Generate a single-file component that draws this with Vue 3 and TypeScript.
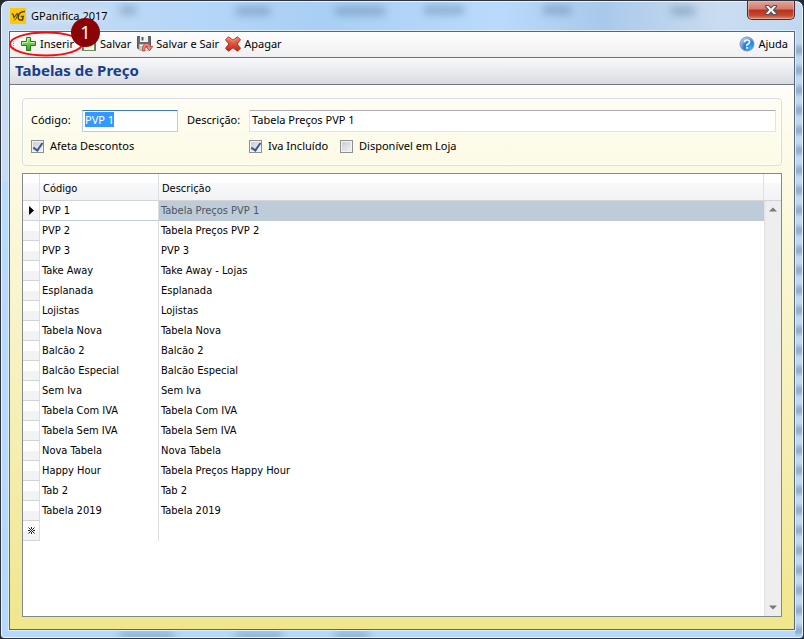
<script setup lang="ts">
import { onMounted, ref } from 'vue'

interface PriceTable {
  code: string
  description: string
}

const priceTables: PriceTable[] = [
  { code: 'PVP 1', description: 'Tabela Preços PVP 1' },
  { code: 'PVP 2', description: 'Tabela Preços PVP 2' },
  { code: 'PVP 3', description: 'PVP 3' },
  { code: 'Take Away', description: 'Take Away - Lojas' },
  { code: 'Esplanada', description: 'Esplanada' },
  { code: 'Lojistas', description: 'Lojistas' },
  { code: 'Tabela Nova', description: 'Tabela Nova' },
  { code: 'Balcão 2', description: 'Balcão 2' },
  { code: 'Balcão Especial', description: 'Balcão Especial' },
  { code: 'Sem Iva', description: 'Sem Iva' },
  { code: 'Tabela Com IVA', description: 'Tabela Com IVA' },
  { code: 'Tabela Sem IVA', description: 'Tabela Sem IVA' },
  { code: 'Nova Tabela', description: 'Nova Tabela' },
  { code: 'Happy Hour', description: 'Tabela Preços Happy Hour' },
  { code: 'Tab 2', description: 'Tab 2' },
  { code: 'Tabela 2019', description: 'Tabela 2019' },
]

const selected = ref(0)
const code = ref(priceTables[0].code)
const description = ref(priceTables[0].description)
const affectsDiscounts = ref(true)
const vatIncluded = ref(true)
const availableInShop = ref(false)
const codeInput = ref<HTMLInputElement | null>(null)

function selectRow(index: number): void {
  selected.value = index
  code.value = priceTables[index].code
  description.value = priceTables[index].description
}

onMounted(() => {
  codeInput.value?.focus()
  codeInput.value?.select()
})
</script>

<template>
  <div class="window">
    <div class="glass" aria-hidden="true">
      <i class="smudge s1"></i><i class="smudge s2"></i><i class="smudge s3"></i>
      <i class="smudge s4"></i><i class="smudge s5"></i><i class="smudge s6"></i>
      <i class="smudge s7"></i><i class="smudge s8"></i><i class="smudge s9"></i>
      <i class="streaks"></i>
    </div>

    <header class="titlebar">
      <svg class="app-icon" viewBox="0 0 16 16" aria-hidden="true">
        <rect width="16" height="16" fill="#fcc70d" />
        <path d="M1.500 6l1.500 0 1 3.500L7.500 5" fill="none" stroke="#4d4312" stroke-width="1.200" />
        <path d="M4 12.500Q7 11 8 5.500" fill="none" stroke="#4d4312" stroke-width="1" />
        <path d="M15 3.500Q9.500 3.500 8.500 7.500T10 12H12.500L13.300 8.500H10.800" fill="none" stroke="#4d4312" stroke-width="1.400" />
      </svg>
      <span class="title">GPanifica 2017</span>
      <button class="close" type="button" aria-label="Fechar">
        <svg viewBox="0 0 14 12" aria-hidden="true">
          <path d="M1.500 1.500h3.300L7 3.800l2.200-2.300h3.300v1.200L9.400 6l3.100 3.300v1.200H9.200L7 8.200l-2.200 2.300H1.500V9.300L4.600 6 1.500 2.700z" fill="#fff" stroke="#535666" stroke-width="1.200" />
        </svg>
      </button>
    </header>

    <main class="client">
      <nav class="toolbar">
        <span class="grip" aria-hidden="true"></span>
        <div class="insert">
          <button class="tool" type="button">
            <svg viewBox="0 0 16 16" aria-hidden="true">
              <defs>
                <linearGradient id="green" x1="0" y1="0" x2="0" y2="1">
                  <stop offset="0" stop-color="#a5e68c" />
                  <stop offset="1" stop-color="#34a51d" />
                </linearGradient>
              </defs>
              <path d="M5.500 1.500h4v4h5v4h-5v5h-4v-5h-5v-4h5z" fill="url(#green)" stroke="#257c19" />
              <path d="M6.500 6.500v-4h2M1.500 8.500V6.500h5M9.500 6.500h4" fill="none" stroke="#c9f3b4" />
            </svg>
            Inserir
          </button>
          <svg class="ring" viewBox="0 0 74 26" aria-hidden="true">
            <ellipse cx="37" cy="13" rx="36" ry="11.500" fill="none" stroke="#f80c0c" stroke-width="2" />
          </svg>
          <span class="step">1</span>
        </div>
        <button class="tool" type="button">
          <svg viewBox="0 0 16 16" aria-hidden="true">
            <path d="M1 1h14v14H1z" fill="#6d7278" />
            <path d="M3 1h9v6H3z" fill="#f6f6f6" />
            <path d="M2.500 7.500h11v7h-11z" fill="#eef6e6" stroke="#6c8c59" />
          </svg>
          Salvar
        </button>
        <button class="tool" type="button">
          <svg viewBox="0 0 16 16" aria-hidden="true">
            <path d="M.5.500H13.500V13.500H2L.5 12z" fill="#696d72" stroke="#53575d" />
            <path d="M3 0h8v6H3z" fill="#f4f4f4" />
            <path d="M4.500 1h2v3.500h-2z" fill="#585c60" />
            <path d="M2.500 8.500h9v6h-9z" fill="#fff" stroke="#bfc2c4" />
            <path d="M3 11h3M3 13h2" stroke="#74a861" />
            <path d="M5.500 15Q5 7.200 10 7.200 13.500 7.500 13.500 10.500H15.800L12.300 14.800 8.800 10.500H10.800Q8 9.500 7.800 15z" fill="#ef8278" stroke="#b33a35" stroke-width=".8" />
          </svg>
          Salvar e Sair
        </button>
        <button class="tool" type="button">
          <svg viewBox="0 0 16 16" aria-hidden="true">
            <defs>
              <linearGradient id="red" x1="0" y1="0" x2="0" y2="1">
                <stop offset="0" stop-color="#f58064" />
                <stop offset="1" stop-color="#c62410" />
              </linearGradient>
            </defs>
            <path d="M3.500.800L8 4.200 12.500.800l3 3L12 8l3.500 4.200-3 3L8 11.800l-4.500 3.400-3-3L4 8 .500 3.800z" fill="url(#red)" stroke="#a51c0d" stroke-width=".9" />
            <path d="M2 3.700L3.700 2 8 5.500 12.500 2" fill="none" stroke="#f9a48c" stroke-width=".8" />
          </svg>
          Apagar
        </button>
        <a class="tool help" href="#ajuda">
          <svg viewBox="0 0 16 16" aria-hidden="true">
            <defs>
              <radialGradient id="blue" cx=".75" cy=".8" r=".9">
                <stop offset="0" stop-color="#35b5f5" />
                <stop offset=".5" stop-color="#2a78dc" />
                <stop offset="1" stop-color="#b5d3f4" />
              </radialGradient>
            </defs>
            <circle cx="8" cy="8" r="7" fill="url(#blue)" stroke="#8298b8" />
            <path d="M5.500 6.300Q5.500 4 8 4t2.600 2.100Q10.600 7.300 9 8T8 9.800M8 11v1.800" fill="none" stroke="#fff" stroke-width="1.700" />
          </svg>
          Ajuda
        </a>
      </nav>

      <h1 class="heading">Tabelas de Preço</h1>

      <section class="content">
        <form class="editor" @submit.prevent>
          <label for="code">Código:</label>
          <input id="code" ref="codeInput" v-model="code" class="field" type="text" />
          <label class="description-label" for="description">Descrição:</label>
          <input id="description" v-model="description" class="field" type="text" />
          <label class="check first">
            <input v-model="affectsDiscounts" type="checkbox" />Afeta Descontos
          </label>
          <div class="checks">
            <label class="check"><input v-model="vatIncluded" type="checkbox" />Iva Incluído</label>
            <label class="check"><input v-model="availableInShop" type="checkbox" />Disponível em Loja</label>
          </div>
        </form>

        <div class="grid">
          <table>
            <colgroup>
              <col class="col-mark" />
              <col class="col-code" />
              <col />
            </colgroup>
            <thead>
              <tr>
                <th></th>
                <th scope="col">Código</th>
                <th scope="col">Descrição</th>
              </tr>
            </thead>
            <tbody>
              <tr
                v-for="(row, index) in priceTables"
                :key="index"
                :class="{ selected: index === selected }"
                @click="selectRow(index)"
              >
                <td class="mark">
                  <svg v-if="index === selected" class="arrow" viewBox="0 0 5 9" aria-hidden="true">
                    <path d="M0 0l5 4.500L0 9z" />
                  </svg>
                </td>
                <td>{{ row.code }}</td>
                <td>{{ row.description }}</td>
              </tr>
              <tr>
                <td class="mark">
                  <svg class="star" viewBox="0 0 7 7" aria-hidden="true">
                    <path d="M.5.500l6 6M6.500.500l-6 6M3.500 0v2M3.500 5v2M0 3.500h2M5 3.500h2" fill="none" stroke="#222" />
                  </svg>
                </td>
                <td></td>
                <td></td>
              </tr>
            </tbody>
          </table>
          <div class="scroll">
            <div class="scroll-head"></div>
            <button type="button" aria-label="Para cima">
              <svg viewBox="0 0 8 5" aria-hidden="true"><path d="M0 4.500L4 .500l4 4z" /></svg>
            </button>
            <button class="down" type="button" aria-label="Para baixo">
              <svg viewBox="0 0 8 5" aria-hidden="true"><path d="M0 .500h8l-4 4z" /></svg>
            </button>
          </div>
        </div>
      </section>
    </main>
  </div>
</template>

<style>
body {
  background: #23272e;
}
</style>

<style scoped>
* {
  box-sizing: border-box;
}

.window {
  position: relative;
  display: flex;
  flex-direction: column;
  min-height: 100vh;
  padding: 0 8px 8px;
  border: 1px solid #2d3440;
  border-radius: 8px 8px 4px 4px;
  background: linear-gradient(90deg, #c9dcf0 0, #b4d6f8 25%, #a9cff4 40%, #b9dafb 62%, #a9c9ea 75%, #cadcf0 90%, #c0d8f0 100%);
  box-shadow: inset 0 0 0 1px #eaf5ff;
  color: #000;
  font-family: "Noto Sans", "Open Sans", sans-serif;
  font-size: 11px;
}

.glass {
  position: absolute;
  inset: 1px;
  overflow: hidden;
  border-radius: 7px 7px 3px 3px;
  background:
    linear-gradient(#b9dafb, #b4d7fb) 0 180px / 7px 100% no-repeat,
    linear-gradient(#b9dafb, #b4d7fb) 0 100% / 100% 8px no-repeat;
}

.smudge {
  position: absolute;
  height: 8px;
  background: #41658a;
  opacity: 0.4;
  filter: blur(4px);
}

.s1 { left: 118px; top: 4px; width: 16px; }
.s2 { left: 234px; top: 5px; width: 34px; }
.s3 { left: 333px; top: 5px; width: 50px; }
.s4 { left: 422px; top: 4px; width: 40px; }
.s5 { left: 541px; top: 4px; width: 28px; }
.s6 { left: 669px; top: 5px; width: 24px; }
.s7 { left: 118px; bottom: -3px; width: 54px; }
.s8 { left: 234px; bottom: -3px; width: 46px; }
.s9 { left: 333px; bottom: -3px; width: 34px; }

.streaks {
  position: absolute;
  top: 35px;
  right: 0;
  bottom: 0;
  width: 7px;
  background: repeating-linear-gradient(transparent 0 6px, #6b8db288 12px 15px, transparent 20px);
}

.titlebar {
  position: relative;
  display: flex;
  align-items: center;
  height: 30px;
  padding-left: 1px;
}

.app-icon {
  width: 16px;
  height: 16px;
}

.title {
  margin-left: 5px;
  line-height: 14px;
  text-shadow: 0 0 6px #fff, 0 0 10px #fff;
}

.close {
  display: grid;
  place-items: center;
  align-self: flex-start;
  width: 48px;
  height: 19px;
  margin-left: auto;
  padding: 0;
  border: 1px solid #4d2a33;
  border-top: 0;
  border-radius: 0 0 5px 5px;
  background: linear-gradient(#e5a397, #d07c6e 45%, #b8301c 50%, #c5492f 80%, #e08a65);
  box-shadow: inset 0 0 0 1px #f0c4bb88;
}

.close svg {
  width: 14px;
  height: 12px;
}

.client {
  position: relative;
  display: flex;
  flex: 1;
  flex-direction: column;
  border: 1px solid #56677c;
  box-shadow: 0 0 0 1px #dcedfd;
  background: #fff;
}

.toolbar {
  display: flex;
  align-items: center;
  gap: 7px;
  height: 26px;
  padding: 0 7px 2px 3px;
  border-bottom: 1px solid #6d6e72;
  background: linear-gradient(#fdfdfd, #f0f0f0);
}

.grip {
  width: 1px;
  height: 12px;
  border-left: 1px dotted #999;
}

.insert {
  position: relative;
}

.tool {
  display: flex;
  align-items: center;
  gap: 3px;
  height: 22px;
  padding: 0;
  border: 0;
  background: none;
  color: #000;
  font: inherit;
  text-decoration: none;
  white-space: nowrap;
}

.tool svg {
  width: 16px;
  height: 16px;
}

.help {
  margin-left: auto;
}

.tool + .tool,
.insert + .tool {
  margin-right: -1px;
}

.ring {
  position: absolute;
  top: -2px;
  left: -12px;
  width: 74px;
  height: 26px;
  pointer-events: none;
}

.step {
  position: absolute;
  z-index: 1;
  top: -15px;
  left: 50px;
  width: 29px;
  height: 29px;
  border-radius: 50%;
  background: #8b0305;
  color: #fff;
  font-size: 18px;
  line-height: 28px;
  text-align: center;
}

.heading {
  height: 27px;
  margin: 0;
  padding-left: 5px;
  border-bottom: 1px solid #75777d;
  background: linear-gradient(#f8f9fa, #d8dce2);
  color: #183f8c;
  font-size: 15px;
  line-height: 25px;
}

.content {
  display: flex;
  flex: 1;
  flex-direction: column;
  gap: 7px;
  padding: 13px 12px 12px;
  background: linear-gradient(#fffdf8, #fdfced 8%, #f0e68c);
}

.editor {
  display: grid;
  grid-template-columns: 51px 96px 71px 1fr;
  align-items: center;
  row-gap: 4px;
  padding: 11px 5px 9px 8px;
  border: 1px solid #d5dfe5;
  border-radius: 4px;
  box-shadow: inset 0 0 0 1px #fffef5;
  line-height: 14px;
}

.editor > label:not(.check) {
  padding-bottom: 2px;
}

.description-label {
  padding-left: 9px;
}

.field {
  width: 100%;
  height: 22px;
  padding: 0 2px 3px;
  border: 1px solid #e2e3ea;
  border-top-color: #abadb3;
  border-radius: 1px;
  outline: 0;
  background: #fff;
  color: #000;
  font: inherit;
}

.field:focus {
  border-color: #b5cfe7;
  border-top-color: #3d7bad;
}

.field::selection {
  background: #3399ff;
  color: #fff;
}

.first {
  grid-column: 1 / 4;
}

.checks {
  display: flex;
  gap: 12px;
}

.check {
  display: flex;
  align-items: center;
  gap: 6px;
  height: 20px;
  white-space: nowrap;
}

.check input {
  width: 13px;
  height: 13px;
  margin: 0;
  appearance: none;
  border: 1px solid #8e8f8f;
  background: linear-gradient(135deg, #c5cad0, #f6f6f6);
  box-shadow: inset 0 0 0 1px #f4f4f4;
}

.check input:checked::before {
  display: block;
  width: 4px;
  height: 8px;
  margin: 0 0 0 3px;
  border: solid #3e5592;
  border-width: 0 2px 2px 0;
  content: "";
  transform: rotate(35deg);
}

.grid {
  display: flex;
  flex: 1;
  align-items: flex-start;
  border: 1px solid #828790;
  background: #fff;
  font-family: "DejaVu Sans Condensed", "DejaVu Sans", sans-serif;
  font-size: 11px;
}

table {
  flex: 1;
  border-collapse: separate;
  border-spacing: 0;
  table-layout: fixed;
}

.col-mark {
  width: 17px;
}

.col-code {
  width: 119px;
}

th,
.scroll-head {
  height: 27px;
  border-right: 1px solid #dfe0e2;
  border-bottom: 1px solid #d4d5d8;
  background: linear-gradient(#fff 35%, #f7f8fa 36%, #f2f3f4);
}

th {
  padding: 3px 3px 0;
  font-weight: 400;
  text-align: left;
}

td {
  height: 20px;
  padding: 0 2px;
  line-height: 20px;
  vertical-align: top;
  white-space: nowrap;
}

td:nth-child(2) {
  border-right: 1px solid #dcdcdc;
}

.mark {
  padding: 0;
  border-right: 1px solid #dcdde0;
  border-bottom: 1px solid #d2d3d6;
  background: linear-gradient(#fff 50%, #f2f3f5 51%);
  line-height: 0;
  text-align: center;
  vertical-align: middle;
}

.selected td:nth-child(2) {
  background: linear-gradient(#becbd9, #becbd9) 0 100% / 100% 1px no-repeat;
}

.selected td:nth-child(3) {
  background: #becbd9;
  color: #4c5663;
}

.arrow {
  width: 5px;
  height: 9px;
}

.star {
  width: 7px;
  height: 7px;
}

.scroll {
  display: flex;
  flex-direction: column;
  align-self: stretch;
  width: 17px;
  background: linear-gradient(90deg, #e3e3e3 1px, #eee 2px);
}

.scroll-head {
  border-right: 0;
}

.scroll button {
  display: grid;
  place-items: center;
  height: 17px;
  padding: 0;
  border: 0;
  background: none;
}

.scroll svg {
  width: 8px;
  height: 5px;
  fill: #777;
}

.scroll .down {
  margin-top: auto;
}
</style>
